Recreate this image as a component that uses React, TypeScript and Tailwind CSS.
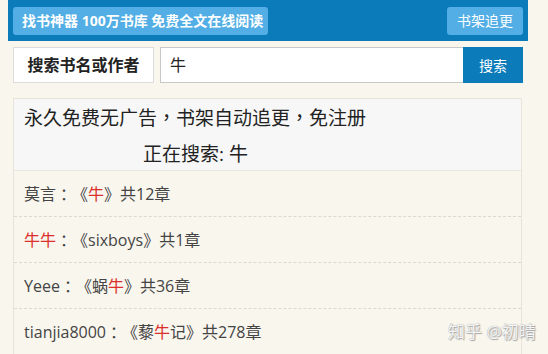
import React from "react";

const F = { fontFamily: '"Microsoft YaHei", "Open Sans", "Noto Sans CJK SC", sans-serif' };

function Hl({ children }: { children: React.ReactNode }) {
  return <span className="text-[#d9302c]">{children}</span>;
}

function P({ children }: { children: React.ReactNode }) {
  return <span className="font-['Noto_Sans_CJK_TC',sans-serif]">{children}</span>;
}

export default function App() {
  const rows: React.ReactNode[] = [
    <>莫言<P>：</P>《<Hl>牛</Hl>》共12章</>,
    <><Hl>牛牛</Hl><P>：</P>《sixboys》共1章</>,
    <>Yeee<P>：</P>《蜗<Hl>牛</Hl>》共36章</>,
    <>tianjia8000<P>：</P>《藜<Hl>牛</Hl>记》共278章</>,
  ];
  return (
    <div className="relative w-[548px] h-[354px] overflow-hidden bg-[#f9f6ee] [text-spacing-trim:space-all]" style={F}>
      <div className="ml-[8px] w-[520px]">
        <div className="h-[41px] bg-[#0b7bb9] px-[5px] flex items-center justify-between">
          <div className="h-[28px] w-[255px] rounded-[3px] bg-[#52aee4] flex items-center pl-[9px] text-white text-[14px] font-bold whitespace-nowrap">
            找书神器 100万书库 免费全文在线阅读
          </div>
          <div className="h-[28px] w-[76px] rounded-[3px] bg-[#52aee4] flex items-center justify-center text-white text-[14px]">
            书架追更
          </div>
        </div>
        <div className="mt-[6px] mx-[5px] h-[36px] flex">
          <div className="w-[141px] h-full bg-white border border-[#dcdcdc] flex items-center justify-center text-[16px] font-bold text-[#222]">
            搜索书名或作者
          </div>
          <div className="ml-[6px] flex-1 h-full bg-white border border-r-0 border-[#c8c8c8] flex items-center pl-[9px] text-[16px] text-[#222]">
            牛
          </div>
          <div className="w-[60px] h-full bg-[#0b7bb9] flex items-center justify-center text-white text-[14px]">
            搜索
          </div>
        </div>
        <div className="mt-[15px] mx-[5px] mr-[6px] border border-[#e8e4da]">
          <div className="h-[72px] bg-[#f7f7f7] border-b border-[#ece8de] pl-[10px] text-[19px] leading-[36px] text-[#222]">
            <div>永久免费无广告<P>，</P>书架自动追更<P>，</P>免注册</div>
            <div className="pl-[119px]">正在搜索: 牛</div>
          </div>
          {rows.map((r, i) => (
            <div
              key={i}
              className="h-[46px] flex items-center pl-[10px] text-[16px] text-[#444] border-b border-dashed border-[#ddd9cf]"
            >
              {r}
            </div>
          ))}
        </div>
      </div>
      <div
        className="absolute left-[448px] top-[319px] text-[17px] text-[#f6f6f6] whitespace-nowrap"
        style={{ textShadow: "0 0 1px #888, 1px 1px 1px #aaa" }}
      >
        知乎 @初晴
      </div>
    </div>
  );
}
